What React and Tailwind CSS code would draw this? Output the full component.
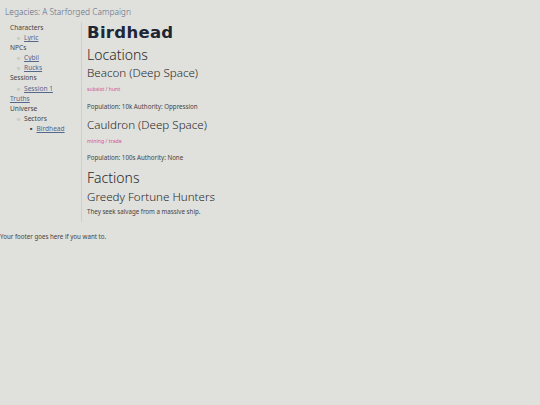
import React from 'react';

const body = { fontFamily: '"Noto Sans", "Open Sans", sans-serif' };

const Link = ({ children }) => (
  <a href="#" className="text-[#56678c] underline underline-offset-1">{children}</a>
);

const Location = ({ name, tags, info, gap }) => (
  <div>
    <h3 className="text-[11.6px] leading-[14px] text-[#2a2a2a] font-light">{name}</h3>
    <p className="text-[5.2px] leading-[8px] text-[#d2549a] mt-[5px]">{tags}</p>
    <p className={`text-[6.2px] leading-[9px] text-[#444] ${gap}`}>{info}</p>
  </div>
);

export default function App() {
  return (
    <div className="w-[540px] h-[405px] bg-[#e0e0dc] text-[#333]" style={body}>
      {/* Header */}
      <header className="h-[22px] px-[5px] pt-[5px] text-[8.4px] leading-[13px] text-[#5c6c84] font-light">
        Legacies: A Starforged Campaign
      </header>

      <div className="flex">
        {/* Sidebar */}
        <aside className="w-[82px] border-r border-[#cfcfca] pl-[10px] pt-[1px] h-[200px] text-[6.6px] leading-[10.1px] text-[#444]">
          <ul>
            <li>Characters
              <ul className="pl-[7px]">
                <li className="flex items-center gap-[4px]"><span className="text-[5px]">○</span><Link>Lyric</Link></li>
              </ul>
            </li>
            <li>NPCs
              <ul className="pl-[7px]">
                <li className="flex items-center gap-[4px]"><span className="text-[5px]">○</span><Link>Cybil</Link></li>
                <li className="flex items-center gap-[4px]"><span className="text-[5px]">○</span><Link>Rucks</Link></li>
              </ul>
            </li>
            <li>Sessions
              <ul className="pl-[7px]">
                <li className="flex items-center gap-[4px]"><span className="text-[5px]">○</span><Link>Session 1</Link></li>
              </ul>
            </li>
            <li><Link>Truths</Link></li>
            <li>Universe
              <ul className="pl-[7px]">
                <li className="flex items-center gap-[4px]"><span className="text-[5px]">○</span>Sectors</li>
                <li className="flex items-center gap-[4px] pl-[13px]"><span className="text-[4px]">■</span><Link>Birdhead</Link></li>
              </ul>
            </li>
          </ul>
        </aside>

        {/* Main */}
        <main className="pl-[5px]">
          <h1
            className="text-[16.5px] leading-[22px] font-extrabold text-[#1d2736] tracking-[0.3px]"
            style={{ fontFamily: '"DejaVu Sans", sans-serif' }}
          >
            Birdhead
          </h1>
          <h2 className="text-[14px] leading-[22px] text-[#2a2a2a] font-light">Locations</h2>
          <Location name="Beacon (Deep Space)" tags="subsist / hunt" info="Population: 10k Authority: Oppression" gap="mt-[8.5px]" />
          <div className="mt-[7.5px]">
            <Location name="Cauldron (Deep Space)" tags="mining / trade" info="Population: 100s Authority: None" gap="mt-[8px]" />
          </div>
          <h2 className="text-[14px] leading-[22px] text-[#2a2a2a] font-light mt-[4.5px]">Factions</h2>
          <h3 className="text-[11.6px] leading-[14px] text-[#2a2a2a] font-light mt-[1px]">Greedy Fortune Hunters</h3>
          <p className="text-[6.2px] leading-[9px] text-[#444] mt-[3.5px]">They seek salvage from a massive ship.</p>
        </main>
      </div>

      <footer className="mt-[10px] text-[6.2px] leading-[9px] text-[#444]">
        Your footer goes here if you want to.
      </footer>
    </div>
  );
}
